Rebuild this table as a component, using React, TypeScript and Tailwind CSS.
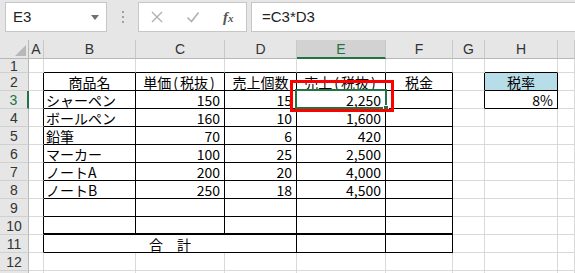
import React from "react";

const COL_W = [
    "w-[29px]",
    "w-[15px]",
    "w-[92px]",
    "w-[89px]",
    "w-[72px]",
    "w-[89px]",
    "w-[67px]",
    "w-[32px]",
    "w-[73px]",
    "flex-1",
];
const COL_LABELS = ["", "A", "B", "C", "D", "E", "F", "G", "H", ""];

// cell contents: [row][col] -> text and alignment
type Cell = { text: React.ReactNode; align?: "l" | "r" | "c"; blue?: boolean };

const Paren = ({ children }: { children: string }) => <span className="mx-[2px]">{children}</span>;

const DATA: Record<number, Record<number, Cell>> = {
    2: {
        2: { text: "商品名", align: "c" },
        3: { text: <>単価<Paren>(</Paren>税抜<Paren>)</Paren></>, align: "c" },
        4: { text: "売上個数", align: "c" },
        5: { text: <>売上<Paren>(</Paren>税抜<Paren>)</Paren></>, align: "c" },
        6: { text: "税金", align: "c" },
        8: { text: "税率", align: "c", blue: true },
    },
    3: { 2: { text: "シャーペン" }, 3: { text: "150", align: "r" }, 4: { text: "15", align: "r" }, 5: { text: "2,250", align: "r" }, 8: { text: "8%", align: "r" } },
    4: { 2: { text: "ボールペン" }, 3: { text: "160", align: "r" }, 4: { text: "10", align: "r" }, 5: { text: "1,600", align: "r" } },
    5: { 2: { text: "鉛筆" }, 3: { text: "70", align: "r" }, 4: { text: "6", align: "r" }, 5: { text: "420", align: "r" } },
    6: { 2: { text: "マーカー" }, 3: { text: "100", align: "r" }, 4: { text: "25", align: "r" }, 5: { text: "2,500", align: "r" } },
    7: { 2: { text: "ノートA" }, 3: { text: "200", align: "r" }, 4: { text: "20", align: "r" }, 5: { text: "4,000", align: "r" } },
    8: { 2: { text: "ノートB" }, 3: { text: "250", align: "r" }, 4: { text: "18", align: "r" }, 5: { text: "4,500", align: "r" } },
};

const inTable = (r: number, c: number) =>
    (r >= 2 && r <= 11 && c >= 2 && c <= 6) || (r >= 2 && r <= 3 && c === 8);

function GridCell({ r, c }: { r: number; c: number }) {
    const cell = DATA[r]?.[c];
    const right = inTable(r, c) || inTable(r, c + 1) ? "border-r-black" : "border-r-[#d9d9d9]";
    const bottom = inTable(r, c) || inTable(r + 1, c) ? "border-b-black" : "border-b-[#d9d9d9]";
    const thick = r === 10 && c >= 2 && c <= 6 ? "border-b-2" : "border-b";
    const align =
        cell?.align === "r" ? "justify-end pr-[4px]" : cell?.align === "c" ? "justify-center" : "justify-start pl-[2px]";
    return (
        <div
            className={`${COL_W[c]} flex shrink-0 items-center whitespace-nowrap border-r ${thick} ${right} ${bottom} ${align} ${
                cell?.blue ? "bg-[#b7dee8]" : "bg-white"
            }`}
        >
            {cell?.text}
        </div>
    );
}

function RowHeader({ r }: { r: number }) {
    const selected = r === 3;
    return (
        <div
            className={`w-[29px] shrink-0 flex items-center justify-center border-b border-b-[#d0d0d0] bg-[#e6e6e6] font-['Liberation_Sans',sans-serif] text-[14px] ${
                selected ? "border-r-2 border-r-[#217346] text-[#217346]" : "border-r border-r-[#b8b8b8] text-[#333]"
            }`}
        >
            {r < 13 ? r : ""}
        </div>
    );
}

function Row({ r }: { r: number }) {
    const h = r === 1 ? "h-[14px]" : "h-[18px]";
    return (
        <div className={`flex ${h}`}>
            <RowHeader r={r} />
            {r === 11 ? (
                <>
                    <GridCell r={r} c={1} />
                    <div className="w-[253px] shrink-0 flex items-center justify-center border-r border-b border-black bg-white">
                        合　計
                    </div>
                    {[5, 6, 7, 8, 9].map((c) => (
                        <GridCell key={c} r={r} c={c} />
                    ))}
                </>
            ) : (
                [1, 2, 3, 4, 5, 6, 7, 8, 9].map((c) => <GridCell key={c} r={r} c={c} />)
            )}
        </div>
    );
}

function FormulaBar() {
    return (
        <div className="flex h-[40px] items-start bg-[#e6e6e6] pl-[5px] pt-[2px]">
            {/* Name box */}
            <div className="relative flex h-[30px] w-[102px] items-center border border-[#c6c6c6] bg-white pl-[7px] font-['Liberation_Sans',sans-serif] text-[15px] text-[#222]">
                E3
                <span className="absolute right-[7px] top-[12px] h-0 w-0 border-x-[4px] border-t-[5px] border-x-transparent border-t-[#707070]" />
            </div>
            {/* dots */}
            <div className="flex w-[31px] flex-col items-center gap-[3px] pt-[9px]">
                <span className="h-[2px] w-[2px] bg-[#a0a0a0]" />
                <span className="h-[2px] w-[2px] bg-[#a0a0a0]" />
                <span className="h-[2px] w-[2px] bg-[#a0a0a0]" />
            </div>
            {/* cancel / enter / fx */}
            <div className="flex h-[30px] w-[109px] items-center border border-[#c6c6c6] bg-white">
                <svg width="14" height="14" viewBox="0 0 14 14" className="ml-[11px]">
                    <path d="M2 2 L12 12 M12 2 L2 12" stroke="#b0b0b0" strokeWidth="1.4" />
                </svg>
                <svg width="14" height="14" viewBox="0 0 14 14" className="ml-[22px]">
                    <path d="M1.5 7.5 L5.5 11.5 L12.5 2.5" stroke="#b0b0b0" strokeWidth="1.6" fill="none" />
                </svg>
                <span className="ml-[23px] font-['Liberation_Serif',serif] text-[15px] font-bold italic text-[#555]">
                    f<span className="text-[11px]">x</span>
                </span>
            </div>
            {/* formula input */}
            <div className="ml-[4px] flex h-[30px] flex-1 items-center border-y border-l border-[#c6c6c6] bg-white pl-[10px] font-['Liberation_Sans',sans-serif] text-[15px] text-[#222]">
                =C3*D3
            </div>
        </div>
    );
}

function ColumnHeaders() {
    return (
        <div className="flex h-[19px] bg-[#e6e6e6] font-['Liberation_Sans',sans-serif] text-[14px] text-[#333]">
            <div className="relative w-[29px] shrink-0 border-r border-b border-[#b8b8b8]">
                <svg width="11" height="11" viewBox="0 0 11 11" className="absolute right-[2px] bottom-[2px]">
                    <polygon points="11,0 11,11 0,11" fill="#b8b8b8" />
                </svg>
            </div>
            {COL_LABELS.slice(1).map((label, i) => {
                const c = i + 1;
                const selected = c === 5;
                return (
                    <div
                        key={c}
                        className={`${COL_W[c]} shrink-0 flex items-center justify-center border-r border-r-[#c8c8c8] ${
                            selected
                                ? "border-b-2 border-b-[#217346] bg-[#d2d2d2] text-[#217346]"
                                : "border-b border-b-[#b8b8b8]"
                        }`}
                    >
                        {label}
                    </div>
                );
            })}
        </div>
    );
}

export default function App() {
    return (
        <div className="relative h-[273px] w-[575px] overflow-hidden bg-white font-['Noto_Sans_CJK_JP',sans-serif] text-[14px] leading-[16px] text-black">
            <FormulaBar />
            <ColumnHeaders />
            {[1, 2, 3, 4, 5, 6, 7, 8, 9, 10, 11, 12, 13].map((r) => (
                <Row key={r} r={r} />
            ))}

            {/* Selected cell E3 */}
            <div className="absolute left-[295px] top-[89px] h-[20px] w-[92px] border-2 border-[#217346]" />
            <div className="absolute left-[383px] top-[105px] h-[6px] w-[6px] border border-white bg-[#217346]" />

            {/* Red highlight box */}
            <div className="absolute left-[290px] top-[80px] h-[32px] w-[104px] border-[3px] border-[#ff0000]" />
        </div>
    );
}
